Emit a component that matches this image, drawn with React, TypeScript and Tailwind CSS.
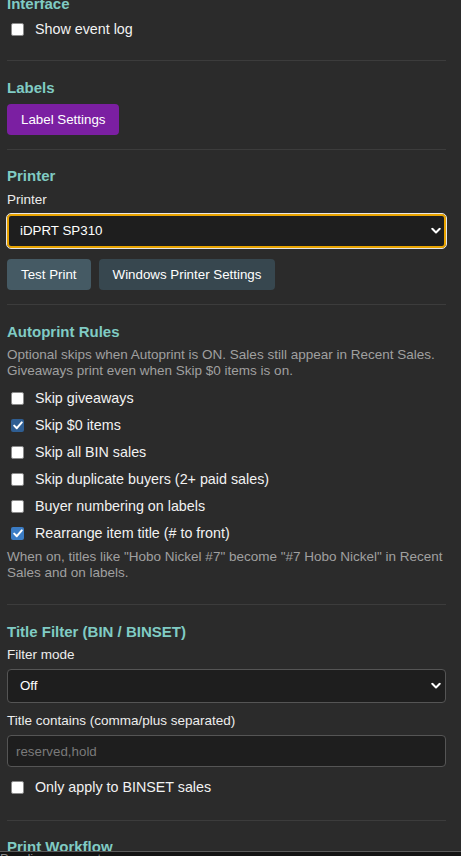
import { ReactNode } from "react";

const FONT = { fontFamily: '"Liberation Sans", Arial, sans-serif' };

function Heading({ children }: { children: ReactNode }) {
  return <h3 className="h-[20px] text-[15px] font-bold leading-[20px] text-[#80cbc4]">{children}</h3>;
}

function Divider() {
  return <div className="h-px bg-[#3c3c3c]" />;
}

function Check({ label, checked, tone }: { label: string; checked?: boolean; tone?: string }) {
  return (
    <label className="flex h-[27px] items-center text-[14.3px] text-[#f2f2f2]">
      {checked ? (
        <span
          className={`ml-[4px] flex h-[13px] w-[13px] items-center justify-center rounded-[2px] ${
            tone === "light" ? "bg-[#3b7cc4]" : "bg-[#2f5e92]"
          }`}
        >
          <svg width="10" height="9" viewBox="0 0 10 9" fill="none">
            <path d="M1.2 4.6 L3.8 7.2 L8.8 1.4" stroke="white" strokeWidth="2" strokeLinecap="round" strokeLinejoin="round" />
          </svg>
        </span>
      ) : (
        <span className="ml-[4px] h-[13px] w-[13px] rounded-[2px] border border-[#8a8a8a] bg-white" />
      )}
      <span className="ml-[11px]">{label}</span>
    </label>
  );
}

function Chevron() {
  return (
    <svg className="pointer-events-none absolute right-[5px] top-1/2 -translate-y-1/2" width="10" height="7" viewBox="0 0 10 7" fill="none">
      <path d="M1.3 1.3 L5 5 L8.7 1.3" stroke="white" strokeWidth="2" strokeLinecap="round" strokeLinejoin="round" />
    </svg>
  );
}

export default function App() {
  return (
    <div style={FONT} className="min-h-screen overflow-hidden bg-[#2b2b2b] pl-[7px] pr-[15px]">
      <section className="-mt-[6px] pb-[17px]">
        <Heading>Interface</Heading>
        <div className="mt-[2px]">
          <Check label="Show event log" />
        </div>
      </section>
      <Divider />

      <section className="pb-[14px] pt-[17px]">
        <Heading>Labels</Heading>
        <button className="mt-[6px] h-[31px] rounded-[4px] bg-[#7b1fa2] px-[14px] text-[13.333px] text-white">
          Label Settings
        </button>
      </section>
      <Divider />

      <section className="pb-[14px] pt-[16px]">
        <Heading>Printer</Heading>
        <div className="mt-[6px] text-[13.5px] leading-[16px] text-[#ededed]">Printer</div>
        <div className="relative mt-[6px]">
          <div className="flex h-[34px] items-center rounded-[4px] border-2 border-[#e8a300] bg-[#1e1e1e] pl-[11px] text-[13.333px] text-white outline outline-1 outline-[#e6e6e6]">
            iDPRT SP310
          </div>
          <Chevron />
        </div>
        <div className="mt-[11px] flex gap-[8px]">
          <button className="h-[31px] rounded-[4px] bg-[#455a64] px-[14px] text-[13.333px] text-white">Test Print</button>
          <button className="h-[31px] rounded-[4px] bg-[#37474f] px-[14px] text-[13.333px] text-white">
            Windows Printer Settings
          </button>
        </div>
      </section>
      <Divider />

      <section className="pb-[23px] pt-[17px]">
        <Heading>Autoprint Rules</Heading>
        <p className="mt-[5px] text-[13.5px] leading-[16px] text-[#a0a0a0]">
          Optional skips when Autoprint is ON. Sales still appear in Recent Sales. Giveaways print even when Skip $0 items is on.
        </p>
        <div className="mt-[6px]">
          <Check label="Skip giveaways" />
          <Check label="Skip $0 items" checked />
          <Check label="Skip all BIN sales" />
          <Check label="Skip duplicate buyers (2+ paid sales)" />
          <Check label="Buyer numbering on labels" />
          <Check label="Rearrange item title (# to front)" checked tone="light" />
        </div>
        <p className="mt-[2px] text-[13.5px] leading-[16px] text-[#a0a0a0]">
          When on, titles like "Hobo Nickel #7" become "#7 Hobo Nickel" in Recent Sales and on labels.
        </p>
      </section>
      <Divider />

      <section className="pb-[19px] pt-[17px]">
        <Heading>Title Filter (BIN / BINSET)</Heading>
        <div className="mt-[5px] text-[13.5px] leading-[16px] text-[#ededed]">Filter mode</div>
        <div className="relative mt-[6px]">
          <div className="flex h-[34px] items-center rounded-[4px] border border-[#555] bg-[#1e1e1e] pl-[12px] text-[13.333px] text-white">
            Off
          </div>
          <Chevron />
        </div>
        <div className="mt-[10px] text-[13.5px] leading-[16px] text-[#ededed]">Title contains (comma/plus separated)</div>
        <input
          placeholder="reserved,hold"
          className="mt-[6px] block h-[32px] w-full rounded-[4px] border border-[#555] bg-[#1e1e1e] px-[8px] text-[13.333px] text-white placeholder:text-[#7a7a7a] focus:outline-none"
        />
        <div className="mt-[7px]">
          <Check label="Only apply to BINSET sales" />
        </div>
      </section>
      <Divider />

      <section className="pt-[16px]">
        <Heading>Print Workflow</Heading>
      </section>

      <div className="fixed bottom-0 left-0 right-0 h-[5px] overflow-hidden border-t border-[#5a5a5a] bg-[#141414]">
        <div className="-mt-[1px] text-[13px] leading-[16px] text-[#8a8a8a]">Pending payment · p</div>
      </div>
    </div>
  );
}
